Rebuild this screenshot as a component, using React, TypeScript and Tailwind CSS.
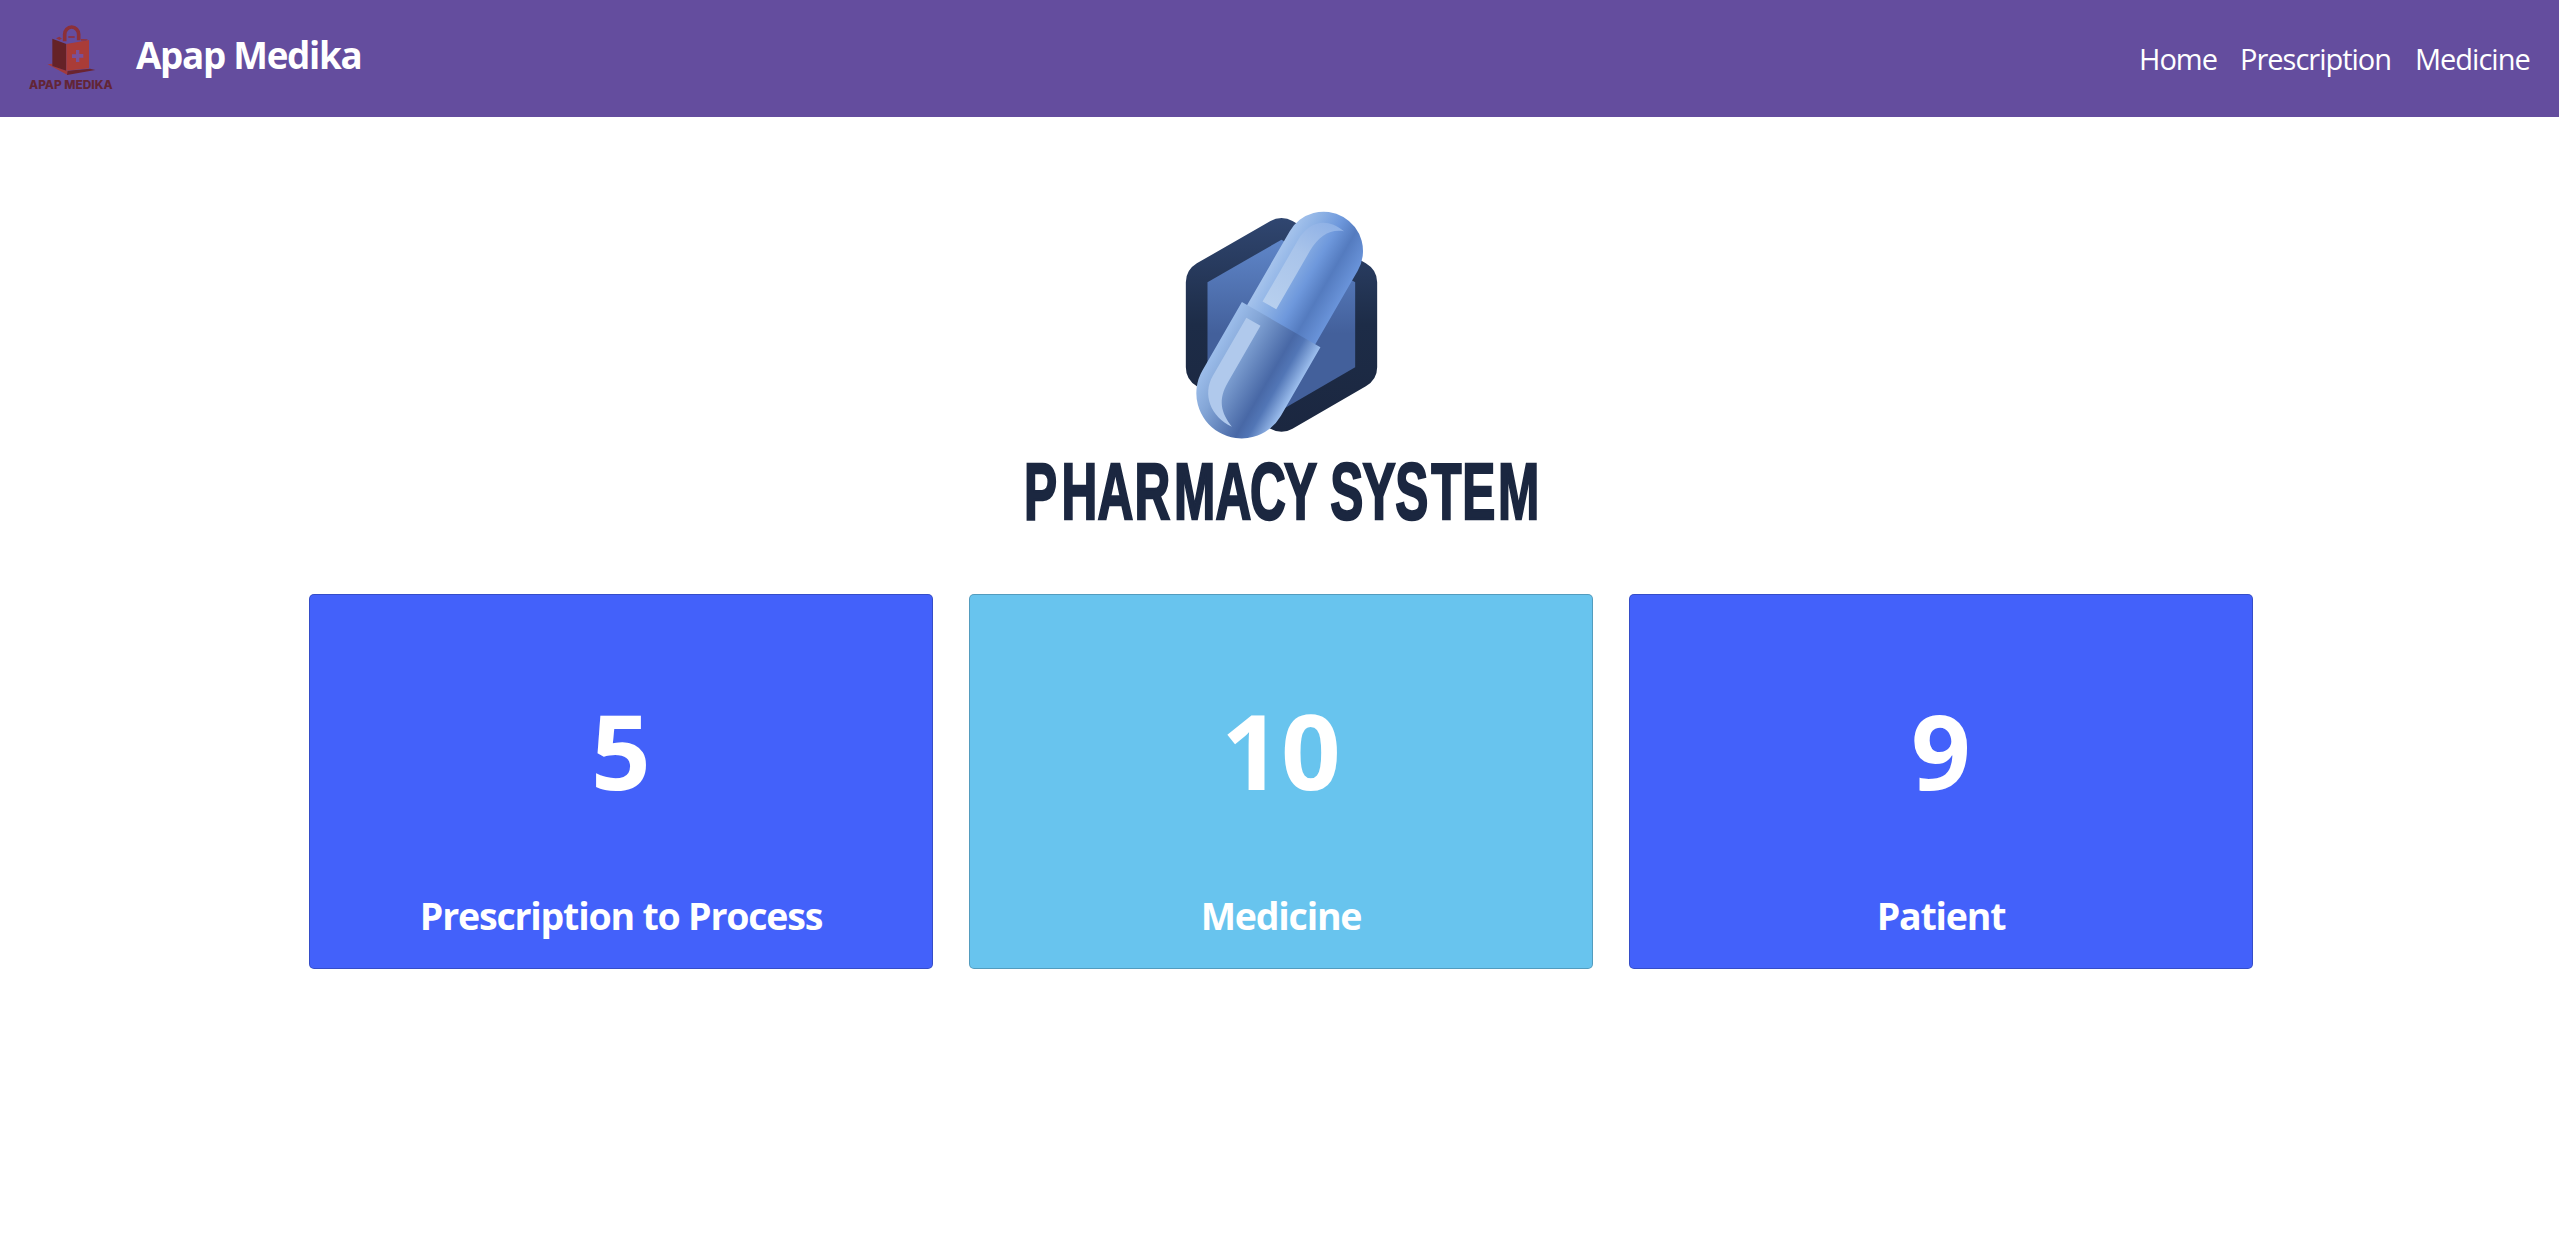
const navLinks = [
  { label: 'Home', width: 'w-[79px]' },
  { label: 'Prescription', width: 'w-[153px]' },
  { label: 'Medicine', width: 'w-[117px]' },
];

const cards = [
  { count: '5', label: 'Prescription to Process', bg: 'bg-[#4361fa]' },
  { count: '10', label: 'Medicine', bg: 'bg-[#68c4ee]' },
  { count: '9', label: 'Patient', bg: 'bg-[#4361fa]' },
];

function BrandLogo() {
  return (
    <svg viewBox="60 60 300 225" className="mb-0.5 h-[75px] w-[100px] shrink-0">
      <path d="M143 193L157 191V198L203 213V225Z" fill="#a33a3b" />
      <path d="M201 225L203 212L270 206L286 210Z" fill="#6b2430" />
      <path d="M157 116L199 132V212L157 198Z" fill="#652227" />
      <path d="M199 132L267 120V205L199 212Z" fill="#aa3c38" />
      <path d="M168 115L178 110L186 116L178 120ZM243 117L264 118L258 122H243Z" fill="#8f3440" />
      <path d="M194 124V103A21 22 0 0 1 236 103V121" fill="none" stroke="#8c3038" strokeWidth="11" />
      <path d="M205 111H224" stroke="#8c3040" strokeWidth="5" />
      <path d="M228 150H238V162H250V173H238V186H228V174H216V163H228Z" fill="#7a5099" />
      <text x="87" y="268" textLength="251" lengthAdjust="spacingAndGlyphs" fill="#622536" className="font-['Inter'] text-[36px] font-extrabold">APAP MEDIKA</text>
    </svg>
  );
}

function PharmacyLogo() {
  return (
    <svg viewBox="0 0 560 360" className="h-[360px] w-[560px]">
      <defs>
        <linearGradient id="frame" x1="0" y1="0" x2="0" y2="1">
          <stop offset="0" stopColor="#304670" />
          <stop offset=".5" stopColor="#1d2c47" />
          <stop offset="1" stopColor="#1b2740" />
        </linearGradient>
        <linearGradient id="hexFill" x1="0" y1="0" x2="0" y2="1">
          <stop offset="0" stopColor="#5f86c9" />
          <stop offset=".55" stopColor="#43609b" />
          <stop offset="1" stopColor="#43609b" />
        </linearGradient>
        <linearGradient id="upper" x1="0" y1="0" x2="1" y2="0">
          <stop offset="0" stopColor="#a5c3ec" />
          <stop offset=".25" stopColor="#8bb0e4" />
          <stop offset=".5" stopColor="#6e98dc" />
          <stop offset=".73" stopColor="#547bbf" />
          <stop offset="1" stopColor="#6a94da" />
        </linearGradient>
        <linearGradient id="lower" x1="0" y1="0" x2="1" y2="0">
          <stop offset="0" stopColor="#9cbdea" />
          <stop offset=".25" stopColor="#83a5d6" />
          <stop offset=".68" stopColor="#4868a6" />
          <stop offset=".8" stopColor="#5276b6" />
          <stop offset="1" stopColor="#9dbfee" />
        </linearGradient>
        <linearGradient id="shine" x1="0" y1="0" x2="0" y2="1">
          <stop offset="0" stopColor="#8fb1e6" />
          <stop offset=".4" stopColor="#a9c4ea" />
          <stop offset="1" stopColor="#b7cfee" />
        </linearGradient>
      </defs>
      <g transform="translate(160.5 0) scale(.333333)">
        <path d="M363 84Q381 84 396 93L616 220Q650 240 650 277V532Q650 569 616 589L396 716Q381 725 363 725Q345 725 330 716L109 589Q76 569 76 532V277Q76 240 109 220L330 93Q345 84 363 84Z" fill="url(#frame)" />
        <path d="M363 149L584 277V532L363 660L141 532V277Z" fill="url(#hexFill)" />
        <g transform="translate(362 404) rotate(30)">
          <path d="M-118 4V-255A118 118 0 0 1 118 -255V4Z" fill="url(#upper)" />
          <path d="M-83 -32V-245C-83 -308 -45 -348 23 -337C-16 -322 -35 -290 -36 -235V-33Z" fill="url(#shine)" />
          <path d="M-136 0V237A136 136 0 0 0 136 237V0Z" fill="url(#lower)" />
          <path d="M-101 34V235C-101 300 -45 345 25 339C-25 318 -52 290 -52 230V34Z" fill="#b0c9ec" />
        </g>
      </g>
      <text
        transform="translate(.5 0) scale(.62 1)"
        y="329"
        x="37.9 98.4 156.6 216.3 279.7 346.6 402.3 457.4 500 531.9 584 636.8 694.8 744.8 802.4"
        strokeWidth="2.4"
        className="fill-[#1b2740] stroke-[#1b2740] font-['Liberation_Sans'] text-[80px] font-bold"
      >
        PHARMACY SYSTEM
      </text>
    </svg>
  );
}

export default function App() {
  return (
    <div className="min-h-screen bg-white font-['Open_Sans',sans-serif] text-white">
      <header className="flex h-[117px] items-center bg-[#644d9e] pr-[27px] pl-5">
        <div className="flex items-center gap-4">
          <BrandLogo />
          <span className="pb-[7px] text-[36.8px] leading-none font-bold tracking-[-1.3px]">Apap Medika</span>
        </div>
        <nav className="ml-auto flex gap-[22px]">
          {navLinks.map((link) => (
            <a key={link.label} href="#" className={`${link.width} text-[29px] leading-10 tracking-[-1px] whitespace-nowrap`}>
              {link.label}
            </a>
          ))}
        </nav>
      </header>
      <main className="flex flex-col items-center pt-[73px]">
        <PharmacyLogo />
        <section className="mt-11 ml-[3px] grid w-[1944px] grid-cols-3 gap-9">
          {cards.map((card) => (
            <article
              key={card.label}
              className={`${card.bg} flex h-[375px] flex-col rounded-[5px] border border-black/20 pt-[41px] text-center font-bold`}
            >
              <p className="text-[104.5px] leading-[227px]">{card.count}</p>
              <h2 className="text-[37.5px] leading-[106px] tracking-[-1.2px]">{card.label}</h2>
            </article>
          ))}
        </section>
      </main>
    </div>
  );
}
